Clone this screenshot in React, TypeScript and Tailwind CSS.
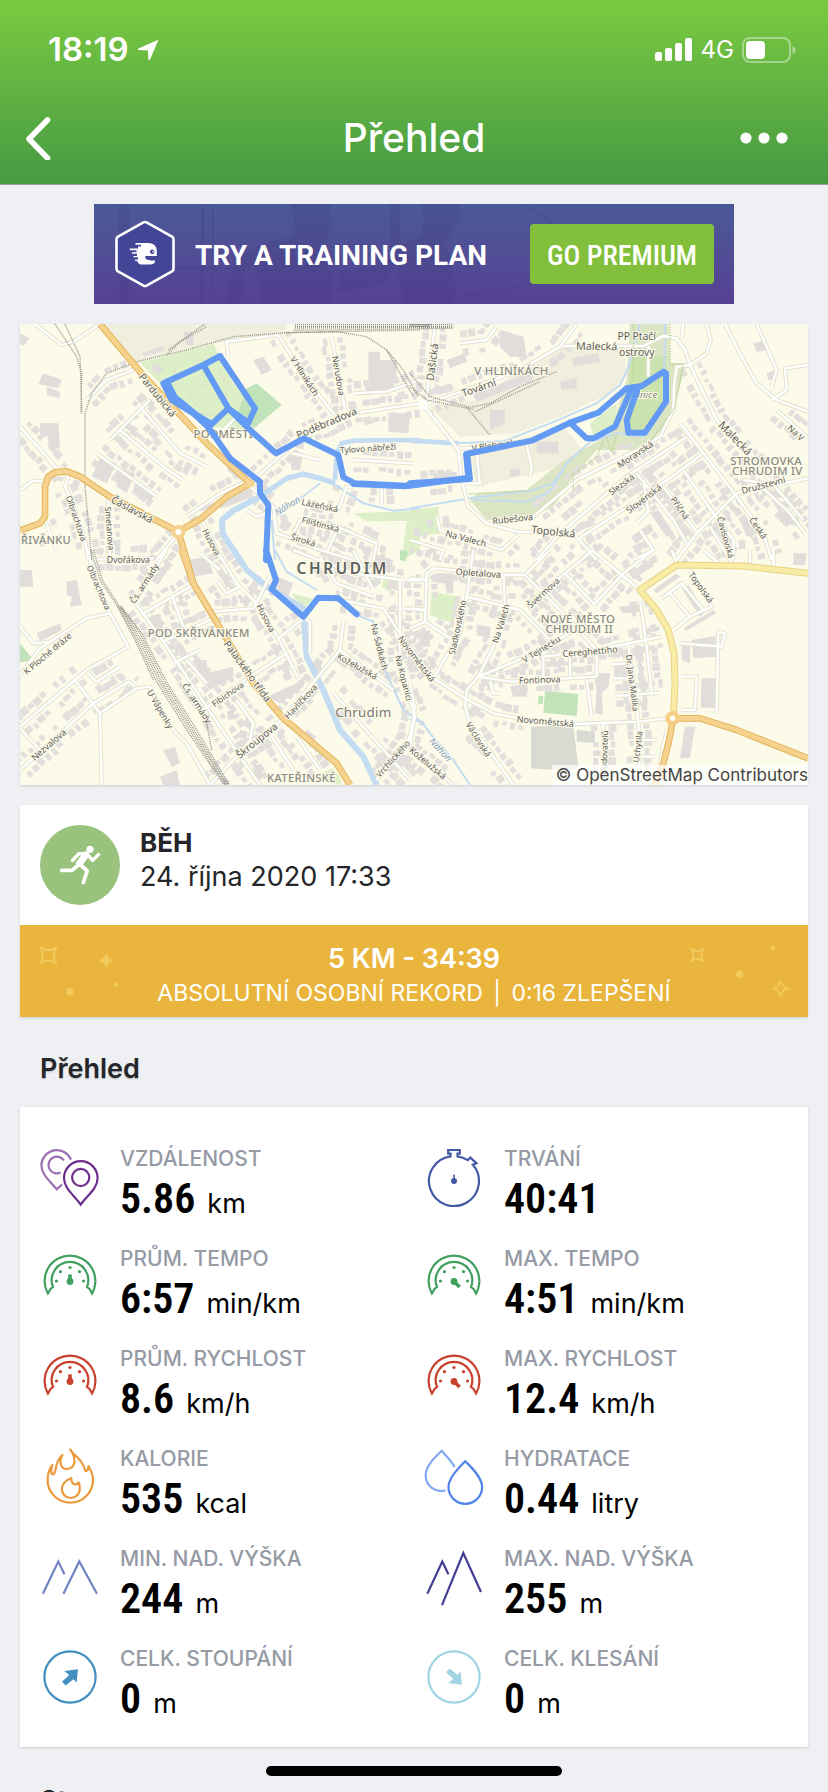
import type { ReactNode } from "react";

type Tile = {
  x: number;
  y: number;
  land: [string, string][];
  water: [string, number][];
  built: string[];
  open: string[];
  blocks: string[];
  rail: string[];
  yellow: string[];
  orange: string[];
  route: string[];
};

type Label = [number, number, string, number, number];

const INDUSTRY = "#f0efdd";
const PARK = "#dcefc6";
const PITCH = "#c0e3ba";
const FOREST = "#dbe5c3";

// Map drawing units are a third of a pixel, each tile has its own origin
const tiles: Tile[] = [
  {
    x: 0,
    y: -12,
    land: [
      ["240,12 800,12 800,40 570,72 430,104 350,132", INDUSTRY],
      ["360,128 580,72 640,190 700,260 690,330 560,320 430,200", PARK],
      ["710,190 785,255 690,335 650,290 680,205", PITCH],
      ["1000,580 1200,572 1200,602 1040,604", PARK],
      ["1160,605 1200,600 1200,690 1145,720", PARK],
    ],
    water: [
      ["945,480 950,400 965,370 1000,362 1200,360", 14],
      ["720,530 800,475 850,462 900,475 945,490", 16],
      ["720,530 640,572 606,600 608,640 660,720", 18],
      ["940,490 1030,550 1120,572 1200,565", 6],
      ["770,590 900,490", 5],
      ["755,600 765,720", 6],
    ],
    built: [
      "0,320 110,445",
      "110,445 145,470 135,500 150,530 195,660 205,720",
      "775,45 860,180 945,285",
      "935,50 975,270",
      "690,490 850,345 1000,280 1200,250",
      "545,600 605,720",
      "475,640 410,720",
      "690,500 760,560 770,640 800,650 900,690 1000,720",
      "75,600 110,690",
      "265,530 270,720",
      "500,590 600,520 690,480",
      "230,400 410,530",
      "300,330 430,440 490,480",
      "360,260 480,400 560,440",
      "200,240 260,180 340,150",
      "390,240 330,300 270,360",
      "1000,500 980,500 955,570",
      "1085,500 1085,555",
      "820,640 840,600 950,620 1070,670 1060,720",
      "1000,220 1100,215 1200,180",
      "820,400 900,420",
      "960,610 920,700",
      "1000,420 1180,430",
    ],
    open: [
      "45,12 125,75 160,65 240,12",
      "0,510 40,482 75,485",
      "775,45 620,65 625,110",
      "650,290 590,350",
      "680,570 710,590 740,580",
    ],
    blocks: [
      "0,40 30,55 10,78 0,70",
      "70,160 125,180 115,205 55,192",
      "80,200 120,215 120,235 80,225",
      "60,310 115,310 120,385 85,385 85,350 60,345",
      "1045,95 1080,95 1080,120 1130,120 1130,190 1045,190",
      "1035,195 1120,180 1125,215 1040,225",
      "240,415 290,430 260,490 215,470",
      "290,440 345,460 320,520 290,500",
      "345,490 410,520 390,545 340,510",
      "640,420 680,450 660,480 620,450",
      "700,120 730,110 755,150 725,165",
      "365,100 430,78 435,92 372,108",
      "400,130 430,145 415,165 395,150",
      "490,35 520,35 520,75 500,75",
      "500,580 690,505 700,530 620,560",
      "810,410 850,400 840,450 815,450",
      "880,540 920,560 905,580 870,570",
      "1105,280 1170,280 1165,340 1105,335",
    ],
    rail: [
      "215,720 195,500 195,280 215,220 260,160 350,125 500,90 640,50 800,38 950,35 1040,50 1100,90 1150,150 1195,230",
      "105,12 170,110 185,160 183,280",
      "135,12 180,110 186,280",
      "445,90 555,12",
      "440,105 480,65 560,20",
      "825,14 1300,14",
      "825,19 1300,19",
      "825,24 1300,22",
      "820,31 1300,25",
      "800,38 1200,30",
      "1100,90 1180,230",
    ],
    yellow: [],
    orange: [
      "240,12 360,155 560,370 690,490",
      "0,632 60,610 75,590 75,500 85,470 105,457 140,454 180,470 270,530 475,635 545,595 620,530 690,490",
      "475,635 500,720 520,790",
    ],
    route: [
      "565,322 520,280 455,240 430,190 550,135 600,108 705,265 685,308 625,265 550,135",
      "572,310 530,285 465,232 444,192",
      "565,322 625,265 690,330 768,400 852,355 955,405 970,472 1005,490 1155,497 1200,492",
      "565,322 630,415 720,485 720,520 745,555 738,720",
      "1000,492 1155,499 1200,490",
    ],
  },
  {
    x: 1170,
    y: -12,
    land: [
      ["200,240 400,100 470,80 640,80 650,160 600,220 450,290 320,340 150,350 60,260", INDUSTRY],
      ["180,400 460,320 520,390 460,440 200,500", INDUSTRY],
      ["660,12 775,12 780,130 830,130 800,230 780,300 700,390 560,390 490,470 430,560 330,600 230,600 180,540 200,520 350,510 450,430 600,340 650,180", FOREST],
      ["660,110 770,110 770,250 700,340 650,330", "#c9e2ae"],
      ["540,310 620,250 620,310 550,350", PARK],
      ["0,570 85,560 90,640 20,650 0,690", PARK],
    ],
    water: [
      ["0,362 140,370 280,364 420,310 560,250 630,195 652,150 690,12", 6],
      ["0,362 145,370", 14],
      ["765,12 762,150", 6],
      ["700,350 620,340 540,365 470,430 430,490 360,512 180,535 0,565", 6],
      ["190,540 350,545 420,515 460,450", 5],
    ],
    built: [
      "75,12 50,230",
      "40,255 320,155 450,80 500,12",
      "840,135 920,300 1010,400 1180,600",
      "680,390 500,480 370,590",
      "810,310 920,450 980,530 1060,640 1085,720",
      "830,350 650,470 450,640 380,720",
      "880,400 730,510 500,660",
      "680,460 790,600 830,670",
      "820,450 910,580 970,660 970,720",
      "1070,490 980,520 860,640 800,720",
      "760,500 860,635",
      "1060,505 1140,580 1185,640",
      "80,590 90,630 275,690 325,645",
      "500,650 560,720",
      "1100,270 1190,350",
      "690,630 730,690 670,720",
      "150,70 230,60 260,20",
      "900,620 960,720",
      "0,660 100,690 90,720",
      "30,490 150,480",
    ],
    open: [
      "40,255 100,330 145,390 155,480 175,560 230,610 320,635 500,640",
      "460,78 700,78 760,48 800,55 825,90 840,135",
      "840,135 890,100 902,60 890,12",
      "840,135 800,140 792,200 790,270 750,350 680,390",
      "945,12 1000,120 1040,190 1100,240 1194,275",
      "1194,135 1125,145 1130,210 1085,240",
      "1040,12 1100,150 1085,200",
      "150,385 300,380",
      "350,375 365,440 360,470",
      "200,400 210,490 160,490",
      "700,480 715,575 680,610",
      "1000,480 1100,495 1194,475",
      "820,12 815,55",
      "715,78 715,170",
    ],
    blocks: [
      "270,30 340,50 350,110 300,110 270,80",
      "110,120 165,100 170,125 120,145",
      "420,120 445,115 445,135 420,140",
      "485,115 565,100 570,125 490,138",
      "450,185 500,175 500,205 455,210",
      "190,225 350,160 370,180 200,245",
      "240,270 285,270 285,310 240,330",
      "380,365 445,365 445,400 380,400",
      "300,450 330,445 330,465 300,470",
      "70,460 140,455 140,470 70,480",
      "1030,70 1070,60 1075,90 1040,95",
      "1075,515 1130,520 1130,535 1075,530",
      "1110,545 1160,545 1160,560 1110,560",
      "990,600 1010,595 1030,640 1010,650",
      "1110,580 1165,590 1170,620 1110,605",
      "720,580 745,570 790,640 770,650",
      "680,640 720,610 730,630 690,660",
      "930,630 950,620 980,690 960,700",
      "1070,160 1095,150 1100,175 1075,180",
    ],
    rail: [
      "0,160 60,230 180,262 240,250 330,200 440,155",
      "0,200 50,240 190,268",
      "170,262 240,345",
      "195,275 390,185",
      "0,14 65,14",
      "0,19 60,19",
    ],
    yellow: [],
    orange: [],
    route: [
      "0,497 175,473 168,402 365,362 480,308 565,278 650,205 695,198 760,155 768,160 768,245 705,338 655,338 650,300 685,200",
      "0,490 180,477 172,405",
      "480,308 530,355 550,355 615,320 665,205",
    ],
  },
  {
    x: 0,
    y: 678,
    land: [
      ["0,280 40,330 0,337", PITCH],
      ["815,130 880,148 845,178", PARK],
      ["1095,75 1130,90 1110,125 1085,110", PARK],
      ["1140,0 1165,5 1155,35 1140,30", PITCH],
      ["880,680 940,655 965,690 960,705", PARK],
    ],
    water: [
      ["640,0 680,60 740,110 850,175 860,320 910,420 960,540 1030,620 1070,705", 18],
      ["765,0 800,65 890,120", 6],
      ["1010,195 1060,215 1090,350 1150,480 1200,512", 6],
    ],
    built: [
      "230,28 400,25",
      "440,0 340,160",
      "370,190 520,105",
      "455,135 490,230",
      "350,165 430,275 580,500 660,620 720,705",
      "430,275 580,205",
      "590,0 650,100 710,160 775,265 835,385",
      "580,185 700,175 750,80",
      "555,475 690,380 800,310",
      "790,505 890,385 960,300 970,215",
      "850,205 775,265",
      "570,705 640,630 785,510",
      "755,560 820,660",
      "940,430 1020,520 1170,690",
      "960,300 1120,420",
      "1140,90 1140,350 1185,500 1165,570 1070,690",
      "960,150 1090,175 1140,250 1200,360",
      "0,530 165,390 200,360",
      "0,660 220,460 325,395 345,410",
      "205,370 230,395 300,350",
      "820,0 1000,70 1150,90",
      "590,90 620,130 660,110",
      "540,10 600,60",
      "830,560 900,660",
      "650,450 700,520 690,570",
      "1000,0 1060,120",
      "900,20 950,100 1060,140",
      "460,340 540,300",
      "500,330 560,400",
    ],
    open: [
      "205,0 215,60 270,190 325,290 200,360",
      "270,190 200,205 60,295 0,375",
      "165,390 240,490 350,415 390,410 420,480 460,540 500,580 570,705",
      "240,490 245,705",
      "0,535 60,600",
      "0,230 40,280 90,275",
      "850,200 870,215 870,310",
      "1160,90 1200,92",
      "1140,175 1200,178",
    ],
    blocks: [
      "140,95 170,90 185,165 150,170 155,140 140,135",
      "50,250 120,220 125,240 60,275",
      "0,60 35,60 40,110 0,110",
      "520,330 560,330 560,370 640,350 640,380 570,420 540,380",
      "740,440 830,400 860,370 850,410 780,460",
      "620,485 640,480 645,505 625,510",
      "680,500 700,510 690,540 670,525",
      "430,600 465,590 480,640 455,650",
      "420,680 470,660 480,705 430,705",
      "390,200 420,190 430,240 400,260",
      "500,30 560,20 580,70 520,80",
      "770,80 820,100 800,150 775,120",
      "1060,10 1120,30 1110,70 1060,50",
      "860,540 890,560 875,580 850,560",
      "700,640 730,650 725,690 700,680",
      "870,350 900,330 905,360 880,380",
    ],
    rail: [
      "213,0 240,90 290,165",
      "220,0 247,90 296,165",
      "290,165 345,270 400,390",
      "294,168 350,270 408,392 500,540 612,705",
      "297,168 356,268 416,392 508,540 616,705",
      "300,168 362,266 424,394 515,540 620,705",
      "303,170 360,250 432,394 522,540 624,705",
      "305,172 366,250 440,396 530,540 628,705",
      "500,430 560,520 575,600",
    ],
    yellow: [],
    orange: ["485,0 520,100 580,200 700,400 790,505 950,640 990,705"],
    route: ["738,0 768,90 755,118 850,200 895,143 955,145 1010,193"],
  },
  {
    x: 1170,
    y: 678,
    land: [
      ["405,423 505,432 500,498 400,488", PITCH],
      ["385,437 400,437 398,462 385,462", PITCH],
      ["65,125 150,140 130,220 60,195", PARK],
      ["363,530 490,525 505,655 430,660 363,655", "#d7dbd1"],
      ["500,540 555,545 555,580 500,575", "#d7dbd1"],
    ],
    water: [["0,508 35,515 60,550 130,630 180,705", 6]],
    built: [
      "545,0 690,120",
      "730,0 640,70 550,165",
      "550,0 465,70 350,165",
      "465,70 555,165",
      "70,55 150,62 280,75 345,75 420,0",
      "345,75 460,190 560,300",
      "190,0 170,140 330,180 420,270",
      "170,140 150,250 70,385",
      "280,75 285,165 250,290 205,380",
      "0,290 70,385 165,445",
      "205,380 350,320 480,250",
      "205,380 300,395 560,380",
      "400,320 560,300 755,260",
      "400,320 400,380",
      "480,320 480,380",
      "690,150 710,290 725,425",
      "655,285 685,515 690,705",
      "615,438 750,428",
      "605,343 655,340",
      "610,385 660,385",
      "165,470 180,520 310,705",
      "70,55 50,70 45,215 0,235",
      "45,215 120,265",
      "580,520 585,705",
      "0,600 130,705",
      "240,395 250,430 270,430",
      "165,445 250,490 350,510",
    ],
    open: [
      "205,380 170,420 165,470",
      "350,510 500,522 685,515 770,505",
      "560,300 560,380",
      "755,145 815,100 880,180",
      "780,130 840,200",
      "840,60 905,170 840,200 790,240",
      "690,570 740,570",
      "695,620 735,620",
      "1020,0 1020,45",
      "1090,0 1090,48",
      "960,0 962,42",
      "880,0 930,42",
      "785,0 800,40",
      "0,85 50,90",
      "0,175 45,180",
      "0,400 14,470 10,520 0,590",
      "810,280 935,290 945,250 925,245 920,490",
      "815,380 860,380 855,480 815,480",
      "530,390 545,500",
      "750,640 770,540",
    ],
    blocks: [
      "845,270 915,258 922,320 850,325",
      "875,385 922,385 918,475 872,472",
      "825,530 855,530 840,625 810,625",
      "625,170 690,165 690,185 640,190",
      "550,370 600,370 595,410 575,430 580,495 555,490 560,420",
      "80,70 130,70 130,130 110,130 105,100 80,100",
      "815,115 835,105 885,185 870,200",
      "730,120 800,70 810,80 740,130",
      "820,235 910,180 918,190 830,242",
      "815,275 840,275 840,340 815,330",
      "200,225 240,230 240,265 200,255",
      "300,410 350,400 350,440 310,440",
      "1150,10 1190,10 1185,45 1150,45",
      "25,250 60,240 60,290 30,290",
    ],
    rail: [],
    yellow: ["1194,70 1000,48 800,45 690,120 740,180 775,240 792,310 795,400 790,500"],
    orange: ["790,505 870,505 980,540 1194,625", "790,505 775,580 760,640 735,705"],
    route: [],
  },
];

const streetLabels: Label[] = [
  [412, 214, "Pardubická", 51, 30],
  [920, 298, "Poděbradova", -23, 31],
  [854, 156, "V Hliníkách", 57, 26],
  [956, 155, "Nerudova", 80, 26],
  [1044, 372, "Tylovo nábřeží", -4, 25],
  [336, 557, "Čáslavská", 28, 30],
  [170, 583, "Olbrachtova", 71, 25],
  [270, 613, "Smetanova", 85, 25],
  [575, 654, "Husova", 62, 25],
  [900, 544, "Lázeňská", 12, 26],
  [902, 600, "Filištínská", 15, 25],
  [850, 648, "Široká", 17, 26],
  [325, 707, "Dvořákova", 0, 26],
  [237, 790, "Olbrachtova", 67, 25],
  [372, 778, "Čs. armády", -57, 26],
  [82, 988, "K Ploché dráze", -40, 26],
  [86, 1262, "Nezvalova", -41, 27],
  [421, 1155, "U Vápenky", 60, 26],
  [531, 1137, "Čs. armády", 57, 26],
  [682, 1042, "Palackého třída", 54, 30],
  [623, 1110, "Fibichova", -35, 25],
  [738, 882, "Husova", 63, 26],
  [842, 1132, "Havlíčkova", -47, 26],
  [711, 1250, "Škroupova", -39, 30],
  [1012, 1026, "Koželužská", 29, 26],
  [1079, 968, "Na Sádkách", 76, 26],
  [1152, 1062, "Na Kopanici", 76, 25],
  [1190, 1004, "Novoměstská", 53, 26],
  [1118, 1304, "Vrchlického", -48, 26],
  [1238, 114, "Dašická", -82, 31],
  [1377, 192, "Tovární", -19, 31],
  [1730, 68, "Malecká", 1, 32],
  [1850, 38, "PP Ptačí", 0, 31],
  [1850, 85, "ostrovy", 0, 31],
  [1428, 362, "V Blehovsku", -8, 26],
  [2145, 344, "Malecká", 46, 33],
  [1845, 391, "Moravská", -34, 27],
  [1804, 481, "Slezská", -36, 26],
  [1871, 524, "Slovenská", -37, 27],
  [1980, 552, "Příčná", 55, 26],
  [2230, 483, "Družstevní", -15, 27],
  [2328, 326, "Na V", 43, 26],
  [2118, 640, "Čavisovská", 74, 25],
  [2215, 612, "Česká", 55, 26],
  [1478, 584, "Rubešova", -6, 27],
  [1600, 624, "Topolská", 6, 32],
  [1338, 643, "Na Valech", 15, 27],
  [1375, 747, "Opletalova", 4, 27],
  [1570, 806, "Švermova", -42, 26],
  [1312, 910, "Sladkovského", -78, 26],
  [1442, 898, "Na Valech", -73, 26],
  [2044, 790, "Topolská", 54, 26],
  [1564, 975, "V Tejnecku", -32, 26],
  [1710, 982, "Cereghettiho", -5, 27],
  [1559, 1067, "Fontinova", -2, 27],
  [1838, 1077, "Dr. Jana Malíka", 83, 25],
  [1576, 1192, "Novoměstská", 5, 27],
  [1376, 1246, "Václavská", 58, 26],
  [1224, 1317, "Koželužská", 40, 26],
  [1752, 1285, "Budovatelů", -88, 25],
  [1852, 1268, "Uchytila", -83, 25],
];

const districtLabels: Label[] = [
  [610, 331, "PODMĚSTÍ", 0, 34],
  [78, 651, "ŘIVÁNKU", 0, 33],
  [536, 930, "POD SKŘIVÁNKEM", 0, 34],
  [844, 1363, "KATEŘINSKÉ", 0, 34],
  [1474, 144, "V HLINÍKÁCH", 0, 34],
  [2238, 413, "STROMOVKA", 0, 34],
  [2242, 443, "CHRUDIM IV", 0, 34],
  [1674, 888, "NOVÉ MĚSTO", 0, 34],
  [1678, 918, "CHRUDIM II", 0, 34],
];

const waterLabels: Label[] = [
  [802, 545, "Náhon", -32, 28],
  [1262, 1277, "Náhon", 48, 28],
];

// Small house blocks on both sides of a street
function houses(points: string, seed: number) {
  const pts = points.split(" ").map((p) => p.split(",").map(Number));
  let n = seed * 37 + 11;
  const rnd = () => {
    n = (n * 1103 + 12345) % 65521;
    return n / 65521;
  };
  let d = "";
  for (let i = 1; i < pts.length; i++) {
    const [ax, ay] = pts[i - 1];
    const [bx, by] = pts[i];
    const len = Math.hypot(bx - ax, by - ay);
    const ux = (bx - ax) / len;
    const uy = (by - ay) / len;
    for (let t = 14; t < len - 8; t += 25) {
      for (const side of [-1, 1]) {
        if (rnd() < 0.14) continue;
        const w = 6 + rnd() * 7;
        const h = 6 + rnd() * 6;
        const off = side * (21 + rnd() * 9);
        const cx = ax + ux * t - uy * off;
        const cy = ay + uy * t + ux * off;
        const corner = (a: number, b: number) =>
          `${Math.round(cx + ux * a - uy * b)} ${Math.round(cy + uy * a + ux * b)}`;
        d += `M${corner(-w, -h)}L${corner(w, -h)}L${corner(w, h)}L${corner(-w, h)}Z`;
      }
    }
  }
  return d;
}

function Layer({ draw }: { draw: (tile: Tile) => ReactNode }) {
  return (
    <>
      {tiles.map((tile) => (
        <g key={`${tile.x}-${tile.y}`} transform={`translate(${tile.x} ${tile.y})`}>
          {draw(tile)}
        </g>
      ))}
    </>
  );
}

const lines = (list: string[], stroke: string, width: number, dash?: string) =>
  list.map((points, i) => (
    <polyline key={i} points={points} stroke={stroke} strokeWidth={width} strokeDasharray={dash} />
  ));

function MapLabels({ items, className }: { items: Label[]; className: string }) {
  return (
    <g className={className} textAnchor="middle" stroke="#fcfae8" strokeWidth="6" paintOrder="stroke">
      {items.map(([x, y, text, angle, size], i) => (
        <text key={i} fontSize={size} dy="10" transform={`translate(${x} ${y}) rotate(${angle})`}>
          {text}
        </text>
      ))}
    </g>
  );
}

function RouteMap() {
  return (
    <svg viewBox="0 0 2364 1383" className="block w-full font-['Noto_Sans',sans-serif]" role="img" aria-label="Mapa trasy">
      <rect width="2364" height="1383" fill="#fcfae8" />
      <g fill="none" strokeLinejoin="round" strokeLinecap="butt">
        <Layer draw={(t) => t.land.map(([p, fill], i) => <polygon key={i} points={p} fill={fill} />)} />
        <Layer draw={(t) => t.built.map((p, i) => <path key={i} d={houses(p, i)} fill="#e2dfdc" />)} />
        <Layer draw={(t) => t.blocks.map((p, i) => <polygon key={i} points={p} fill="#e0dddb" />)} />
        <Layer draw={(t) => t.water.map(([p, w], i) => <polyline key={i} points={p} stroke="#c4dcf2" strokeWidth={w} />)} />
        <Layer draw={(t) => lines([...t.built, ...t.open], "#e3e3d0", 13)} />
        <Layer draw={(t) => lines([...t.built, ...t.open], "#ffffff", 7)} />
        <g stroke="#e3dccb" strokeWidth="4" strokeDasharray="4 3">
          <path d="M470 110L460 180L520 200M520 190Q500 220 540 250L590 230Q600 200 560 180ZM540 250V270H600M590 140L640 200M600 140Q620 180 620 230" />
        </g>
        <g stroke="#b5cf8c" strokeWidth="4" strokeDasharray="4 4">
          <path d="M1840 0V170M1950 0V120H1990L1965 250L1880 370M1750 350L1730 400L1660 450V500M1350 510L1520 500M1760 340L1775 385L1790 330" />
        </g>
        <Layer draw={(t) => lines(t.rail, "#92928a", 4, "3 3")} />
        <Layer draw={(t) => lines(t.yellow, "#e5d58a", 21)} />
        <Layer draw={(t) => lines(t.orange, "#e2b458", 20)} />
        <Layer draw={(t) => lines(t.yellow, "#f9eca4", 15)} />
        <Layer draw={(t) => lines(t.orange, "#f6d28f", 14)} />
        <circle cx="475" cy="624" r="15" fill="#fff" stroke="#f6d28f" strokeWidth="12" />
        <circle cx="690" cy="477" r="8" fill="#fcfae8" stroke="#f6d28f" strokeWidth="12" />
        <circle cx="1958" cy="1183" r="15" fill="#fff" stroke="#f6cf86" strokeWidth="14" />
        <circle cx="1210" cy="243" r="10" fill="#fcfae8" stroke="#fff" strokeWidth="8" />
      </g>
      <MapLabels items={districtLabels} className="fill-[#8a8a86] font-medium tracking-wider" />
      <MapLabels items={streetLabels} className="fill-[#5c5c5c]" />
      <MapLabels items={waterLabels} className="fill-[#7f9fc4] italic" />
      <MapLabels items={[[1882, 212, "lnice", 0, 29]]} className="fill-[#7d8d77] italic" />
      <MapLabels items={[[1030, 1168, "Chrudim", 0, 40]]} className="fill-[#777] tracking-wider" />
      <MapLabels items={[[968, 740, "CHRUDIM", 0, 46]]} className="fill-[#606060] font-semibold tracking-[8px]" />
      <g fill="none" strokeLinejoin="round" strokeLinecap="round">
        <Layer draw={(t) => lines(t.route, "#639bf4", 18)} />
      </g>
    </svg>
  );
}

function Icon({ color, children }: { color: string; children: ReactNode }) {
  return (
    <svg viewBox="0 0 60 60" className="size-15 shrink-0" fill="none" stroke={color} strokeWidth="2.2" aria-hidden="true">
      {children}
    </svg>
  );
}

const PinsIcon = () => (
  <Icon color="#6d2f8d">
    <path
      stroke="#9a6fb3"
      d="M22 37.5L16.7 42.3C9.5 33.5 1.4 27.5 1.4 18A15.4 15.4 0 0 1 31 12.6M24 13.5A8.4 8.4 0 1 0 20.5 25.6"
    />
    <path d="M40.7 57.5C34 48 24 41.5 24 31A16.8 16.8 0 0 1 57.6 31C57.6 41.5 47.5 48 40.7 57.5Z" />
    <circle cx="40.7" cy="30.5" r="8.6" />
  </Icon>
);

const StopwatchIcon = () => (
  <Icon color="#4459a4">
    <path d="M26.5 9.3V6.6H24.2V3H35.8V6.6H33.5V9.3A25 25 0 0 1 43.8 13.2L46.3 10.6L52.4 16.2L48.8 17.6A25 25 0 1 1 26.5 9.3Z" />
    <path d="M30 27.5V34" strokeWidth="1.6" />
    <circle cx="30" cy="34" r="3" fill="#4459a4" stroke="none" />
  </Icon>
);

const GaugeIcon = ({ color, max = false }: { color: string; max?: boolean }) => (
  <Icon color={color}>
    <path d="M7.9 46.5A25.4 25.4 0 1 1 52.1 46.5L49.5 42L47 40A18.3 18.3 0 1 0 13 40L10.5 42Z" />
    <g fill={color} stroke="none">
      <circle cx="16.5" cy="34" r="1.6" />
      <circle cx="20.5" cy="24.7" r="1.6" />
      <circle cx="30" cy="20.5" r="1.6" />
      <circle cx="39.5" cy="24.7" r="1.6" />
      <circle cx="43.5" cy="34" r="1.6" />
      <circle cx="30" cy="34.5" r="3.4" />
    </g>
    <path d={max ? "M30 34.5L35.6 40" : "M30 34V27.4"} strokeWidth="3.6" />
  </Icon>
);

const FlameIcon = () => (
  <Icon color="#ea9a3c">
    <path
      strokeLinejoin="round"
      d="M30.3 2.5C33.5 9 42.5 11 45.2 23.5C47 24.8 48.6 22.5 48.5 19C51.5 24 53 28 53 33A22.7 22.7 0 0 1 7.6 33C7.6 27.5 9 22 12.4 18C10.5 24 11 27.5 13.2 27.3C17 26.5 14 15 22.4 8C18.5 15 21 22.3 27 22C34 21.5 38 14 30.3 2.5Z"
    />
    <path
      strokeLinejoin="round"
      d="M31.3 31C25.5 33.5 21.8 37 21.8 42A9 9 0 0 0 39.8 42C39.8 39.5 39.5 37.5 38.6 35.2C37.5 38.4 31.2 38.8 31.3 31Z"
    />
  </Icon>
);

const DropsIcon = () => (
  <Icon color="#5084ea">
    <path stroke="#82a8f2" d="M30.5 20C28 14.5 21.5 8 17.7 3.8C11.5 10 1.6 18.5 1.6 28.5A15.6 15.6 0 0 0 21.5 43.4" />
    <path d="M41.3 14.2C36 19.5 24.5 30 24.5 40A16.8 16.8 0 0 0 58.1 40C58.1 30 46.5 19.5 41.3 14.2Z" />
  </Icon>
);

const MinAltitudeIcon = () => (
  <Icon color="#7186c1">
    <path d="M2.9 46.7L18.3 14.5L24.4 27.3M23.4 46.7L39.3 14.5L57 46.7" />
  </Icon>
);

const MaxAltitudeIcon = () => (
  <Icon color="#423f92">
    <path d="M3.3 46.7L18.3 14.5L24.4 27.3M18 58.2L39.3 6L57 45" />
  </Icon>
);

const AscentIcon = () => (
  <Icon color="#4390c0">
    <circle cx="30" cy="30" r="25.6" />
    <path fill="#4390c0" stroke="none" d="M24.3 24L38 22.2L36.6 35.5L33.3 32.2L25.7 38.6L22 34.7L29.2 28Z" />
  </Icon>
);

const DescentIcon = () => (
  <Icon color="#a1d5e4">
    <circle cx="30" cy="30" r="25.6" />
    <path fill="#a1d5e4" stroke="none" d="M24.3 36L38 37.8L36.6 24.5L33.3 27.8L25.7 21.4L22 25.3L29.2 32Z" />
  </Icon>
);

const stats = [
  { label: "VZDÁLENOST", value: "5.86", unit: "km", icon: <PinsIcon /> },
  { label: "TRVÁNÍ", value: "40:41", unit: "", icon: <StopwatchIcon /> },
  { label: "PRŮM. TEMPO", value: "6:57", unit: "min/km", icon: <GaugeIcon color="#41a05e" /> },
  { label: "MAX. TEMPO", value: "4:51", unit: "min/km", icon: <GaugeIcon color="#41a05e" max /> },
  { label: "PRŮM. RYCHLOST", value: "8.6", unit: "km/h", icon: <GaugeIcon color="#c8412f" /> },
  { label: "MAX. RYCHLOST", value: "12.4", unit: "km/h", icon: <GaugeIcon color="#c8412f" max /> },
  { label: "KALORIE", value: "535", unit: "kcal", icon: <FlameIcon /> },
  { label: "HYDRATACE", value: "0.44", unit: "litry", icon: <DropsIcon /> },
  { label: "MIN. NAD. VÝŠKA", value: "244", unit: "m", icon: <MinAltitudeIcon /> },
  { label: "MAX. NAD. VÝŠKA", value: "255", unit: "m", icon: <MaxAltitudeIcon /> },
  { label: "CELK. STOUPÁNÍ", value: "0", unit: "m", icon: <AscentIcon /> },
  { label: "CELK. KLESÁNÍ", value: "0", unit: "m", icon: <DescentIcon /> },
];

function StatusBar() {
  return (
    <div className="flex h-25 items-center justify-between pl-12 pr-8">
      <div className="flex items-center gap-2">
        <span className="text-[33px] font-semibold">18:19</span>
        <svg viewBox="0 0 22 22" className="size-[22px]" fill="currentColor" aria-hidden="true">
          <path d="M20.2 1.2Q21.4.8 21 2L13 20.6Q12 22 11.4 20.4L11 11.4L1.6 11Q0 10.4 1.4 9.4Z" />
        </svg>
      </div>
      <div className="flex items-center gap-2">
        <svg viewBox="0 0 38 24" className="h-6 w-[38px]" fill="currentColor" aria-hidden="true">
          <rect x="0" y="14" width="7" height="9" rx="2" />
          <rect x="10" y="10" width="7" height="13" rx="2" />
          <rect x="20" y="5" width="7" height="18" rx="2" />
          <rect x="30" y="0" width="7" height="23" rx="2" />
        </svg>
        <span className="text-2xl">4G</span>
        <svg viewBox="0 0 54 26" className="h-[26px] w-[54px]" aria-hidden="true">
          <rect x="1" y="1" width="47" height="24" rx="7" fill="none" stroke="#fff" strokeWidth="2" opacity="0.4" />
          <rect x="4" y="4" width="19" height="18" rx="4" fill="#fff" />
          <path d="M50.5 9Q53.5 10 53.5 13T50.5 17Z" fill="#fff" opacity="0.45" />
        </svg>
      </div>
    </div>
  );
}

function NavBar() {
  return (
    <div className="grid h-[84px] grid-cols-[1fr_auto_1fr] items-center px-6 pb-3 pt-1">
      <button type="button" aria-label="Zpět" className="justify-self-start">
        <svg viewBox="0 0 28 44" className="h-11 w-7" fill="none" stroke="#fff" strokeWidth="5.6" strokeLinecap="round" strokeLinejoin="round">
          <path d="M23.5 4L5 23L23.5 42" />
        </svg>
      </button>
      <h1 className="text-[39px] font-medium leading-12">Přehled</h1>
      <button type="button" aria-label="Další možnosti" className="justify-self-end pr-4">
        <svg viewBox="0 0 48 12" className="h-3 w-12" fill="#fff">
          <circle cx="6" cy="6" r="5.6" />
          <circle cx="24" cy="6" r="5.6" />
          <circle cx="42" cy="6" r="5.6" />
        </svg>
      </button>
    </div>
  );
}

function PremiumBanner() {
  return (
    <section className="relative mx-auto flex h-25 w-160 items-center bg-gradient-to-b from-[#4a5a97] to-[#564094] pl-[21px] pr-5 text-white">
      <svg viewBox="0 0 640 100" className="absolute inset-0 size-full" fill="#3f3a7d" aria-hidden="true">
        <g opacity="0.22">
          <path d="M196 0H236L238 22L232 38Q225 42 222 50L240 70L236 100H168L160 60L150 70L146 100H132Q132 70 150 50Q170 36 196 34L200 20Z" />
          <path d="M328 0H364L366 14L356 30L350 42Q364 58 360 100H310L302 60L290 80L244 88L246 66L286 62Q300 40 326 34L330 20Z" />
          <rect x="25" width="10" height="100" />
          <rect x="107" width="3" height="100" />
          <rect x="118" width="2" height="90" />
          <rect x="296" width="10" height="60" />
        </g>
        <path d="M40 64H150M370 92L640 44M430 0L520 60M440 0H640V20" fill="none" stroke="#3f3a7d" strokeWidth="2" opacity="0.2" />
      </svg>
      <svg viewBox="0 0 60 68" className="relative h-17 w-15 shrink-0" aria-hidden="true">
        <path
          d="M28.5 2.4Q30 1.5 31.5 2.4L57 16.6Q58.5 17.5 58.5 19.2V48.8Q58.5 50.5 57 51.4L31.5 65.6Q30 66.5 28.5 65.6L3 51.4Q1.5 50.5 1.5 48.8V19.2Q1.5 17.5 3 16.6Z"
          fill="#434596"
          stroke="#fff"
          strokeWidth="2.6"
        />
        <path
          d="M20.5 23H34Q41.5 23.5 41.8 31V36H30.5Q29.5 38 31.5 39.6L36 40.4H40.2Q40 44.4 35 44.6H26Q22.5 43.5 22 40.8H20V39.6H23V37.2H18.5V36H22V33.8H17V32.2H21.5V30.2H14.8V28.6H23V26.4H26V24.8H20.5Z"
          fill="#fff"
        />
        <circle cx="37.2" cy="31.8" r="2.2" fill="#434596" />
        <circle cx="38" cy="31.6" r=".8" fill="#fff" />
      </svg>
      <p className="relative ml-5 flex-1 whitespace-nowrap pt-1 font-['Roboto',sans-serif] text-[28px] font-bold">TRY A TRAINING PLAN</p>
      <button
        type="button"
        className="relative h-15 w-46 whitespace-nowrap rounded-[4px] bg-[#82bf3b] pt-1 font-['Roboto_Condensed','Roboto',sans-serif] text-[28px] font-medium"
      >
        GO PREMIUM
      </button>
    </section>
  );
}

function RecordBanner() {
  return (
    <div className="relative flex h-23 flex-col items-center justify-center bg-[#eab53d] pt-2 text-white">
      <svg viewBox="0 0 84 60" className="absolute left-4 top-4 h-15 w-21" fill="#f1cb5c" aria-hidden="true">
        <path d="M5 7Q12.3 11 19.6 7Q16 14 19.6 21.6Q12.3 18 5 21.6Q8.6 14 5 7Z" fill="none" stroke="#f1cb5c" strokeWidth="2" />
        <path d="M70 12Q71.5 18 77.5 19.5Q71.5 21 70 27Q68.5 21 62.5 19.5Q68.5 18 70 12Z" />
        <circle cx="33.7" cy="50.7" r="3.8" />
        <circle cx="79.7" cy="44" r="2.2" />
      </svg>
      <svg viewBox="0 0 110 60" className="absolute right-4 top-4 h-15 w-27.5" fill="#f1cb5c" aria-hidden="true">
        <path d="M10 8.5Q15.5 11.5 21 8.5Q18 14 21 19.5Q15.5 16.5 10 19.5Q13 14 10 8.5Z" fill="none" stroke="#f1cb5c" strokeWidth="2" />
        <circle cx="90.5" cy="7" r="2.2" />
        <circle cx="57.5" cy="33" r="3.8" />
        <path d="M98.5 40Q100 46 105.5 47.5Q100 49 98.5 55Q97 49 91.5 47.5Q97 46 98.5 40Z" fill="none" stroke="#f1cb5c" strokeWidth="1.6" />
      </svg>
      <p className="text-[27px] font-semibold leading-9">5 KM - 34:39</p>
      <p className="text-[23px] leading-8">
        ABSOLUTNÍ OSOBNÍ REKORD <span className="px-1">|</span> 0:16 ZLEPŠENÍ
      </p>
    </div>
  );
}

export default function App() {
  return (
    <div className="flex h-screen flex-col overflow-hidden bg-[#eff0f3] font-['Inter',sans-serif] text-[#242629]">
      <header className="shrink-0 border-b border-[#9aa09a] bg-gradient-to-b from-[#7aca40] to-[#469a42] text-white">
        <StatusBar />
        <NavBar />
      </header>

      <main className="flex-1 px-5 pt-[19px]">
        <PremiumBanner />

        <section className="relative mt-5 shadow-sm">
          <RouteMap />
          <p className="absolute bottom-0 right-0 bg-white/70 pl-1 text-[17px] leading-5 text-[#444]">© OpenStreetMap Contributors</p>
        </section>

        <section className="mt-5 bg-white shadow-sm">
          <div className="flex h-30 gap-5 p-5">
            <svg viewBox="0 0 80 80" className="size-20 shrink-0" aria-hidden="true">
              <circle cx="40" cy="40" r="40" fill="#99c27d" />
              <circle cx="50" cy="24.3" r="3.6" fill="#fff" />
              <g fill="none" stroke="#fff" strokeWidth="3.4" strokeLinecap="round" strokeLinejoin="round">
                <path d="M32.5 35.5L38.5 28.8H47L52.6 35.4L58.5 29.6" />
                <path d="M21.8 45.4H32L39.5 39L47.2 46L43.3 57.5" strokeWidth="3.8" />
                <path d="M45.5 30L39.5 38.5" strokeWidth="7" />
              </g>
            </svg>
            <div>
              <h2 className="text-[26px] font-bold leading-9">BĚH</h2>
              <p className="text-[27px] leading-8">24. října 2020 17:33</p>
            </div>
          </div>
          <RecordBanner />
        </section>

        <h2 className="px-5 pb-7 pt-[42px] text-[27px] font-semibold leading-5 text-shadow-sm">Přehled</h2>

        <section className="grid grid-cols-2 bg-white pl-5 pt-10 shadow-sm">
          {stats.map((stat) => (
            <div key={stat.label} className="flex h-25 gap-5">
              {stat.icon}
              <div>
                <h3 className="text-[21px] font-medium leading-6 text-[#959aa5]">{stat.label}</h3>
                <p className="flex items-baseline gap-3 leading-14 text-black">
                  <span className="font-['Roboto_Condensed','Roboto',sans-serif] text-[42px] font-semibold">{stat.value}</span>
                  {stat.unit && <span className="text-[27px]">{stat.unit}</span>}
                </p>
              </div>
            </div>
          ))}
        </section>

        <h2 className="px-5 pt-9 text-[27px] font-semibold leading-9 text-shadow-sm">St</h2>
      </main>

      <div className="fixed inset-x-0 bottom-4 mx-auto h-[10px] w-74 rounded-full bg-black" />
    </div>
  );
}
